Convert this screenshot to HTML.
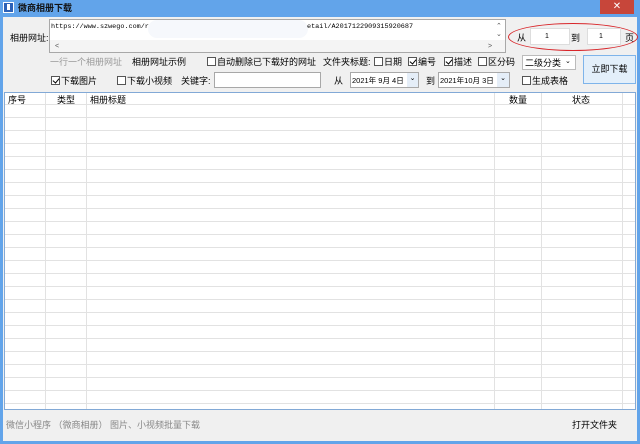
<!DOCTYPE html>
<html><head><meta charset="utf-8"><style>
*{margin:0;padding:0;box-sizing:border-box}
body{width:640px;height:444px;overflow:hidden;background:#62a4ea;font-family:"Liberation Sans","Noto Sans CJK SC",sans-serif;font-size:9px;color:#000;position:relative}
.a{position:absolute;white-space:nowrap;line-height:10px}
#main{position:absolute;left:3px;top:17px;width:634px;height:424px;background:#f0f0f0}
.cb{position:absolute;width:9px;height:9px;border:1px solid #555;background:#fff}
.cb.c::after{content:"";position:absolute;left:2px;top:0px;width:3px;height:5px;border:solid #000;border-width:0 1.3px 1.3px 0;transform:rotate(40deg)}
.box{position:absolute;background:#fff;border:1px solid #a8a8a8}
.mono{font-family:"Liberation Mono",monospace;font-size:6.8px}
</style></head><body>
<div class="a" style="left:3px;top:2px;width:11px;height:11px;background:#2d62b8;border:1px solid #fff"></div>
<div class="a" style="left:7px;top:4px;width:3px;height:6px;background:#fff"></div>
<div class="a" style="left:18px;top:3px;font-weight:bold;font-size:9px;color:#111">微商相册下载</div>
<div class="a" style="left:600px;top:0;width:34px;height:14px;background:#c7463a;color:#fff;text-align:center;font-size:10px;line-height:14px">✕</div>
<div id="main"></div>
<div class="a" style="left:10px;top:33px">相册网址:</div>
<div class="box" style="left:49px;top:19px;width:457px;height:34px"></div>
<div class="a" style="left:50px;top:40px;width:455px;height:12px;background:#f4f4f4"></div>
<div class="a mono" style="left:51px;top:22px">https://www.szwego.com/r</div>
<div class="a" style="left:148px;top:20px;width:160px;height:18px;background:#f6f8fc;border-radius:9px"></div>
<div class="a mono" style="left:307px;top:22px">etail/A2017122909315920687</div>
<div class="a" style="left:496px;top:22px;font-size:7px;color:#555">⌃</div>
<div class="a" style="left:496px;top:30px;font-size:7px;color:#555">⌄</div>
<div class="a" style="left:55px;top:42px;font-size:7px;color:#555">&lt;</div>
<div class="a" style="left:488px;top:42px;font-size:7px;color:#555">&gt;</div>
<div class="a" style="left:508px;top:23px;width:130px;height:28px;border:1.5px solid #d8262a;border-radius:50%"></div>
<div class="a" style="left:517px;top:33px">从</div>
<div class="box" style="left:530px;top:28px;width:40px;height:17px;border-color:#ddd"></div>
<div class="a" style="left:545px;top:32px;font-size:7px">1</div>
<div class="a" style="left:571px;top:33px">到</div>
<div class="box" style="left:587px;top:28px;width:34px;height:17px;border-color:#ddd"></div>
<div class="a" style="left:599px;top:32px;font-size:7px">1</div>
<div class="a" style="left:625px;top:33px">页</div>
<div class="a" style="left:50px;top:57px;color:#999">一行一个相册网址</div>
<div class="a" style="left:132px;top:57px">相册网址示例</div>
<div class="cb" style="left:207px;top:57px"></div><div class="a" style="left:217px;top:57px">自动删除已下载好的网址</div>
<div class="a" style="left:323px;top:57px">文件夹标题:</div>
<div class="cb" style="left:374px;top:57px"></div><div class="a" style="left:384px;top:57px">日期</div>
<div class="cb c" style="left:408px;top:57px"></div><div class="a" style="left:418px;top:57px">编号</div>
<div class="cb c" style="left:444px;top:57px"></div><div class="a" style="left:454px;top:57px">描述</div>
<div class="cb" style="left:478px;top:57px"></div><div class="a" style="left:488px;top:57px">区分码</div>
<div class="box" style="left:522px;top:55px;width:54px;height:15px;border-color:#bbb"></div>
<div class="a" style="left:525px;top:58px">二级分类</div>
<div class="a" style="left:565px;top:57px;font-size:7px">⌄</div>
<div class="a" style="left:583px;top:55px;width:53px;height:29px;background:#e3effa;border:1px solid #7eb4ea;text-align:center;line-height:27px">立即下载</div>
<div class="cb c" style="left:51px;top:76px"></div><div class="a" style="left:61px;top:76px">下载图片</div>
<div class="cb" style="left:117px;top:76px"></div><div class="a" style="left:127px;top:76px">下载小视频</div>
<div class="a" style="left:181px;top:76px">关键字:</div>
<div class="box" style="left:214px;top:72px;width:107px;height:16px"></div>
<div class="a" style="left:334px;top:76px">从</div>
<div class="box" style="left:350px;top:72px;width:69px;height:16px"></div>
<div class="a" style="left:352px;top:76px;font-size:7.5px">2021年 9月 4日</div>
<div class="a" style="left:407px;top:73px;width:11px;height:14px;background:#e5eef8;font-size:7px;text-align:center;line-height:12px">⌄</div>
<div class="a" style="left:426px;top:76px">到</div>
<div class="box" style="left:438px;top:72px;width:72px;height:16px"></div>
<div class="a" style="left:440px;top:76px;font-size:7.5px">2021年10月 3日</div>
<div class="a" style="left:497px;top:73px;width:12px;height:14px;background:#e5eef8;font-size:7px;text-align:center;line-height:12px">⌄</div>
<div class="cb" style="left:522px;top:76px"></div><div class="a" style="left:532px;top:76px">生成表格</div>
<svg class="a" style="left:4px;top:92px" width="632" height="318">
<rect x="0.5" y="0.5" width="631" height="317" fill="#fff" stroke="#82a9d6"/>
<g stroke="#e2e2e2">
<line x1="1" y1="12.5" x2="631" y2="12.5"/>
<line x1="1" y1="25.5" x2="631" y2="25.5"/><line x1="1" y1="38.5" x2="631" y2="38.5"/><line x1="1" y1="51.5" x2="631" y2="51.5"/><line x1="1" y1="64.5" x2="631" y2="64.5"/><line x1="1" y1="77.5" x2="631" y2="77.5"/><line x1="1" y1="90.5" x2="631" y2="90.5"/><line x1="1" y1="103.5" x2="631" y2="103.5"/><line x1="1" y1="116.5" x2="631" y2="116.5"/><line x1="1" y1="129.5" x2="631" y2="129.5"/><line x1="1" y1="142.5" x2="631" y2="142.5"/><line x1="1" y1="155.5" x2="631" y2="155.5"/><line x1="1" y1="168.5" x2="631" y2="168.5"/><line x1="1" y1="181.5" x2="631" y2="181.5"/><line x1="1" y1="194.5" x2="631" y2="194.5"/><line x1="1" y1="207.5" x2="631" y2="207.5"/><line x1="1" y1="220.5" x2="631" y2="220.5"/><line x1="1" y1="233.5" x2="631" y2="233.5"/><line x1="1" y1="246.5" x2="631" y2="246.5"/><line x1="1" y1="259.5" x2="631" y2="259.5"/><line x1="1" y1="272.5" x2="631" y2="272.5"/><line x1="1" y1="285.5" x2="631" y2="285.5"/><line x1="1" y1="298.5" x2="631" y2="298.5"/><line x1="1" y1="311.5" x2="631" y2="311.5"/>
<line x1="41.5" y1="1" x2="41.5" y2="317"/><line x1="82.5" y1="1" x2="82.5" y2="317"/><line x1="490.5" y1="1" x2="490.5" y2="317"/><line x1="537.5" y1="1" x2="537.5" y2="317"/><line x1="618.5" y1="1" x2="618.5" y2="317"/>
</g></svg>
<div class="a" style="left:8px;top:95px">序号</div>
<div class="a" style="left:57px;top:95px">类型</div>
<div class="a" style="left:90px;top:95px">相册标题</div>
<div class="a" style="left:509px;top:95px">数量</div>
<div class="a" style="left:572px;top:95px">状态</div>
<div class="a" style="left:6px;top:420px;color:#888">微信小程序 （微商相册） 图片、小视频批量下载</div>
<div class="a" style="left:572px;top:420px">打开文件夹</div>
</body></html>
